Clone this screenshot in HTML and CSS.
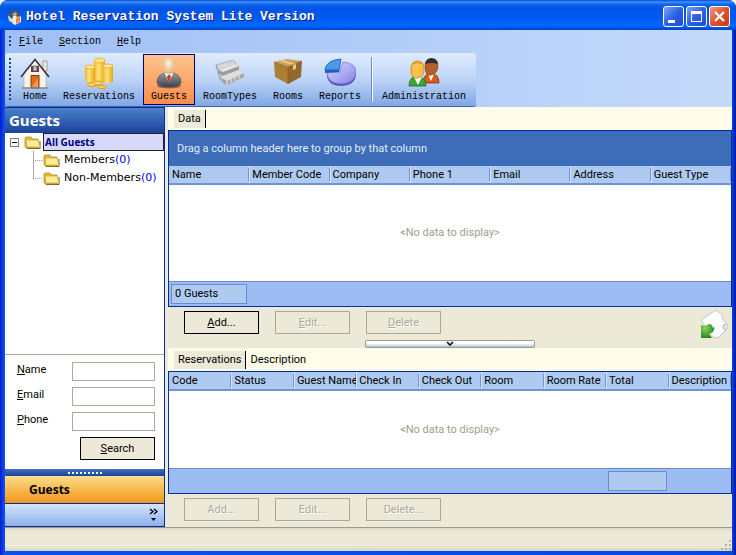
FILE: index.html
```html
<!DOCTYPE html>
<html lang="en">
<head>
    <meta charset="UTF-8">
    <meta name="viewport" content="width=device-width, initial-scale=1.0">
    <title>Hotel Reservation System Lite Version</title>
    <link rel="stylesheet" href="styles.css">
</head>
<body>
<div class="window">
    <header class="titlebar">
        <svg class="app-icon" width="14" height="16" viewBox="0 0 14 16">
            <path d="M4 7L11 5l2 3v5l-6 3-3-2z" fill="#f6ede4"/>
            <path d="M8 9l4-2v6l-4 2z" fill="#e88a50"/>
            <path d="M0 7l2-1 3 4v4l-4-2z" fill="#d4d8e2"/>
            <path d="M0 5L5 1l5 1 3 5-4 1-3-3-2 5-3-3z" fill="#4e525c"/>
            <path d="M4 5l4-2 1 3-3 1z" fill="#a8b0c0"/>
        </svg>
        <h1>Hotel Reservation System Lite Version</h1>
        <div class="window-buttons">
            <button type="button" aria-label="Minimize">
                <svg width="19" height="19" viewBox="0 0 19 19"><path d="M4 13h7v3H4z" fill="#fff"/></svg>
            </button>
            <button type="button" aria-label="Maximize">
                <svg width="19" height="19" viewBox="0 0 19 19"><path d="M4 4h11v11H4z M5 7v7h9V7z" fill="#fff" fill-rule="evenodd"/></svg>
            </button>
            <button type="button" class="close" aria-label="Close">
                <svg width="19" height="19" viewBox="0 0 19 19"><path d="M5 5l9 9M14 5l-9 9" stroke="#fff" stroke-width="2.4"/></svg>
            </button>
        </div>
    </header>

    <div class="bars">
        <nav class="menubar">
            <span class="grip"></span>
            <a href="#"><u>F</u>ile</a>
            <a href="#"><u>S</u>ection</a>
            <a href="#"><u>H</u>elp</a>
        </nav>
        <div class="toolbar">
            <span class="grip"></span>
            <button type="button" class="tool">
                <svg width="32" height="32" viewBox="0 0 32 32">
                    <path d="M24 4h4v10h-4z" fill="#ece8de" stroke="#888" stroke-width=".7"/>
                    <path d="M5 15L16 3l11 12v16H5z" fill="#f6f3ec" stroke="#b0aca4" stroke-width=".6"/>
                    <path d="M2 20L16 2.500 30 20" fill="none" stroke="#35353a" stroke-width="1.600"/>
                    <path d="M12 9h8v6h-8z" fill="#8c3038"/>
                    <path d="M14 9h4v5h-4z" fill="#b8c6d8" stroke="#444" stroke-width=".7"/>
                    <path d="M12 18.500h8V31h-8z" fill="#e66a1e" stroke="#863810"/>
                    <path d="M13 30l6-9v9z" fill="#f49a4c"/>
                    <path d="M3 31h26" stroke="#888" stroke-width="1.500"/>
                </svg>
                Home
            </button>
            <button type="button" class="tool">
                <svg width="32" height="32" viewBox="0 0 32 32">
                    <defs>
                        <linearGradient id="gold">
                            <stop offset="0" stop-color="#f2b428"/><stop offset=".4" stop-color="#ffe27a"/><stop offset="1" stop-color="#e8a418"/>
                        </linearGradient>
                    </defs>
                    <path d="M11 3v21a5 2 0 0 0 11 0V3z" fill="url(#gold)"/>
                    <ellipse cx="16.500" cy="3.500" rx="5.500" ry="2.500" fill="#ffe27a" stroke="#e4a420" stroke-width=".7"/>
                    <path d="M2 10v13a5 2 0 0 0 10 0V10z" fill="url(#gold)"/>
                    <ellipse cx="7" cy="10" rx="5" ry="2" fill="#ffe68c" stroke="#e4a420" stroke-width=".7"/>
                    <path d="M20 9v15a5 2 0 0 0 10 0V9z" fill="url(#gold)"/>
                    <ellipse cx="25" cy="9" rx="5" ry="2" fill="#ffe68c" stroke="#e4a420" stroke-width=".7"/>
                    <ellipse cx="9" cy="27.500" rx="4.500" ry="2" fill="#ffd44c" stroke="#e09c18"/>
                    <ellipse cx="15" cy="26" rx="4" ry="2" fill="#ffe070" stroke="#e09c18"/>
                    <ellipse cx="19" cy="30" rx="4.500" ry="1.500" fill="#ffd44c" stroke="#e09c18"/>
                </svg>
                Reservations
            </button>
            <button type="button" class="tool active">
                <svg width="32" height="32" viewBox="0 0 32 32">
                    <defs>
                        <radialGradient id="head" cx=".45" cy=".3" r=".7">
                            <stop offset="0" stop-color="#fff0d4"/><stop offset="1" stop-color="#d8b084"/>
                        </radialGradient>
                        <linearGradient id="suit" x2="0" y2="1">
                            <stop offset="0" stop-color="#9498a0"/><stop offset=".5" stop-color="#6c7078"/><stop offset="1" stop-color="#3c4048"/>
                        </linearGradient>
                    </defs>
                    <ellipse cx="16" cy="29" rx="12" ry="2.500" fill="#a06440"/>
                    <path d="M4 25q0-7 8-9h8q8 2 8 9 0 5-12 5T4 25z" fill="url(#suit)" stroke="#4a4e56" stroke-width=".6"/>
                    <path d="M11.500 16l4.500 9 4.500-9z" fill="#f8f8fa"/>
                    <path d="M15 18h2l1 2-2 6-2-6z" fill="#d03c20"/>
                    <path d="M10.500 8q0-7 5.500-7t5.500 7q0 5-2.500 8t-6 0q-2.500-3-2.500-8z" fill="url(#head)"/>
                </svg>
                Guests
            </button>
            <button type="button" class="tool">
                <svg width="32" height="32" viewBox="0 0 32 32">
                    <path d="M2 8l17-5 3 3-2 4-14 5z" fill="#d6d6d6" stroke="#a0a0a0" stroke-width=".7"/>
                    <path d="M5 13l17-6 3 2v4L8 19l-4-3z" fill="#9c9c9c"/>
                    <path d="M5 13l17-6 3 2-16 6z" fill="#e6e6e6"/>
                    <path d="M6 20l19-7 5 3v4l-16 8-4-1z" fill="#a8a8a8"/>
                    <path d="M6 20l19-7 5 3-17 8z" fill="#dedede"/>
                    <path d="M2 8l4 14 7 6" fill="none" stroke="#989898"/>
                    <path d="M13 24v4M17 22v4M21 20v4M25 18v4" stroke="#e4e4e4"/>
                </svg>
                RoomTypes
            </button>
            <button type="button" class="tool">
                <svg width="32" height="32" viewBox="0 0 32 32">
                    <path d="M2 5L14 2l16 2-13 6z" fill="#cda258"/>
                    <path d="M2 5l14 5v17L3 20z" fill="#aa7e34"/>
                    <path d="M30 4L16 10v17l13-7z" fill="#94682a"/>
                    <path d="M7 4l14 4v5l3-1V7L11 3z" fill="#e6c78c"/>
                    <path d="M2 5l14 5 14-6M16 10v17" fill="none" stroke="#7e5820" stroke-width=".6"/>
                </svg>
                Rooms
            </button>
            <button type="button" class="tool">
                <svg width="32" height="32" viewBox="0 0 32 32">
                    <defs>
                        <linearGradient id="pie" x2="1" y2="1">
                            <stop offset="0" stop-color="#dcdcff"/><stop offset="1" stop-color="#8480e4"/>
                        </linearGradient>
                    </defs>
                    <path d="M3 17v3q2 9 15 9 13-1 14-11v-3z" fill="#5a56b8"/>
                    <path d="M16 15l3-10q13 1 13 10-1 11-14 12Q4 27 3 16z" fill="url(#pie)" stroke="#6c68cc" stroke-width=".6"/>
                    <path d="M1 12Q3 3 17 2l-2 11H1z" fill="#4a9ae8" stroke="#1c5aa8" stroke-width=".8"/>
                    <path d="M1 13v3l14-1 2-10-2 8z" fill="#1c62b8"/>
                </svg>
                Reports
            </button>
            <span class="divider"></span>
            <button type="button" class="tool">
                <svg width="32" height="32" viewBox="0 0 32 32">
                    <path d="M15 26q0-9 8-10 8 1 8 10z" fill="#dc5a1c" stroke="#8c2c08" stroke-width=".8"/>
                    <path d="M20 17l3 7 3-7z" fill="#fff"/>
                    <path d="M17 9q0-7 6.500-7t6.500 7-6.500 9T17 9z" fill="#b4602c" stroke="#7c3810" stroke-width=".6"/>
                    <path d="M17 7q1-6 6.500-6T30 7q-6-2-13 0z" fill="#2c3030"/>
                    <path d="M1 29q0-9 8-10 9 1 9 10z" fill="#38a838" stroke="#147018" stroke-width=".8"/>
                    <path d="M6 20l4 8 4-8z" fill="#fff"/>
                    <path d="M3 12q0-8 6.500-8T16 12t-6.500 9T3 12z" fill="#ffc04c" stroke="#c87810" stroke-width=".8"/>
                    <path d="M4 8q2-4 5.500-4T15 8Q9 5 4 8z" fill="#f0a020"/>
                </svg>
                Administration
            </button>
        </div>
    </div>

    <div class="content">
        <aside class="sidebar">
            <h2>Guests</h2>
            <ul class="tree">
                <li>
                    <div class="node">
                        <button type="button" class="toggle" aria-label="Collapse"></button>
                        <svg class="folder" width="17" height="15" viewBox="0 0 17 15">
                            <path d="M3 13.500h13V6" fill="none" stroke="#6c5c28"/>
                            <path d="M1 3l1-1h5l1 2h6v9H2l-1-2z" fill="#e8bc40" stroke="#b08a1c" stroke-width=".8"/>
                            <path d="M3 12L2 5h12l2 7z" fill="#ffec94" stroke="#c09a2c" stroke-width=".6"/>
                        </svg>
                        <a href="#" class="selected">All Guests</a>
                    </div>
                    <ul>
                        <li class="node">
                            <svg class="folder" width="17" height="15" viewBox="0 0 17 15">
                                <path d="M3 13.500h13V6" fill="none" stroke="#6c5c28"/>
                                <path d="M1 3l1-1h5l1 2h6v9H2l-1-2z" fill="#e8bc40" stroke="#b08a1c" stroke-width=".8"/>
                                <path d="M3 12L2 5h12l2 7z" fill="#ffec94" stroke="#c09a2c" stroke-width=".6"/>
                            </svg>
                            <a href="#">Members<span>(0)</span></a>
                        </li>
                        <li class="node">
                            <svg class="folder" width="17" height="15" viewBox="0 0 17 15">
                                <path d="M3 13.500h13V6" fill="none" stroke="#6c5c28"/>
                                <path d="M1 3l1-1h5l1 2h6v9H2l-1-2z" fill="#e8bc40" stroke="#b08a1c" stroke-width=".8"/>
                                <path d="M3 12L2 5h12l2 7z" fill="#ffec94" stroke="#c09a2c" stroke-width=".6"/>
                            </svg>
                            <a href="#">Non-Members<span>(0)</span></a>
                        </li>
                    </ul>
                </li>
            </ul>
            <form class="search">
                <label for="name"><u>N</u>ame</label>
                <input type="text" id="name">
                <label for="email"><u>E</u>mail</label>
                <input type="text" id="email">
                <label for="phone"><u>P</u>hone</label>
                <input type="text" id="phone">
                <button type="button" class="btn"><u>S</u>earch</button>
            </form>
            <div class="side-splitter"></div>
            <button type="button" class="section-button">Guests</button>
            <div class="side-footer">
                <button type="button" aria-label="More sections">
                    <svg width="9" height="14" viewBox="0 0 9 14">
                        <path d="M1 1l3 2.500L1 6M5 1l3 2.500L5 6" fill="none" stroke="#000" stroke-width="1.300"/>
                        <path d="M2 10h5L4.500 13z"/>
                    </svg>
                </button>
            </div>
        </aside>

        <main class="main">
            <div class="tabs">
                <button type="button" class="tab current">Data</button>
            </div>
            <div class="grid grid-guests">
                <div class="group-bar">Drag a column header here to group by that column</div>
                <table>
                    <thead>
                        <tr><th>Name</th><th>Member Code</th><th>Company</th><th>Phone 1</th><th>Email</th><th>Address</th><th>Guest Type</th></tr>
                    </thead>
                    <tbody>
                        <tr><td colspan="7">&lt;No data to display&gt;</td></tr>
                    </tbody>
                    <tfoot>
                        <tr><td><div class="summary">0 Guests</div></td><td colspan="6"></td></tr>
                    </tfoot>
                </table>
            </div>
            <div class="actions">
                <button type="button" class="btn"><u>A</u>dd...</button>
                <button type="button" class="btn" disabled><u>E</u>dit...</button>
                <button type="button" class="btn" disabled><u>D</u>elete</button>
                <button type="button" class="export" aria-label="Export">
                    <svg width="28" height="30" viewBox="0 0 28 30">
                        <defs>
                            <radialGradient id="arrow" cx=".3" cy=".3" r=".8">
                                <stop offset="0" stop-color="#8cd460"/><stop offset="1" stop-color="#1c7c10"/>
                            </radialGradient>
                        </defs>
                        <path d="M1 11L16 1l6 5 1 5 4 4v5l-9 9-5-1z" fill="#fdfdfd" stroke="#c4c4c8"/>
                        <path d="M26 15q-3 0-3 3t3 3" fill="#e4e4ec" stroke="#b4b4c0"/>
                        <path d="M1 16l4 1 4-2 3 1 1 3 2-1-2 5-4 2 3 4H1z" fill="url(#arrow)"/>
                    </svg>
                </button>
            </div>
            <button type="button" class="splitter" aria-label="Collapse details">
                <svg width="8" height="5" viewBox="0 0 8 5"><path d="M1 1l3 3 3-3" fill="none" stroke="#000" stroke-width="1.500"/></svg>
            </button>
            <div class="tabs">
                <button type="button" class="tab current">Reservations</button>
                <button type="button" class="tab">Description</button>
            </div>
            <div class="grid grid-details">
                <table>
                    <thead>
                        <tr><th>Code</th><th>Status</th><th>Guest Name</th><th>Check In</th><th>Check Out</th><th>Room</th><th>Room Rate</th><th>Total</th><th>Description</th></tr>
                    </thead>
                    <tbody>
                        <tr><td colspan="9">&lt;No data to display&gt;</td></tr>
                    </tbody>
                    <tfoot>
                        <tr><td colspan="7"></td><td><div class="summary"></div></td><td></td></tr>
                    </tfoot>
                </table>
            </div>
            <div class="actions">
                <button type="button" class="btn" disabled>Add...</button>
                <button type="button" class="btn" disabled>Edit...</button>
                <button type="button" class="btn" disabled>Delete...</button>
            </div>
        </main>
    </div>

    <footer class="statusbar">
        <svg width="12" height="12" viewBox="0 0 12 12">
            <path d="M9 1h2v2H9zM5 5h2v2H5zM9 5h2v2H9zM1 9h2v2H1zM5 9h2v2H5zM9 9h2v2H9z" fill="#b8b4a0"/>
        </svg>
    </footer>
</div>
</body>
</html>
```

FILE: styles.css
```css
* { box-sizing: border-box; }
body { margin: 0; background: #fff; font: 11px/14px Roboto, "Liberation Sans", Arial, sans-serif; color: #000; }
button, input { font: inherit; color: inherit; margin: 0; padding: 0; border: 0; background: none; }
a { color: inherit; text-decoration: none; }
ul { list-style: none; margin: 0; padding: 0; }
svg { display: block; }

.window { display: flex; flex-direction: column; min-height: 100vh; padding: 0 4px 4px 5px; border-radius: 8px 8px 0 0; background: linear-gradient(to right, #0019cf, #0a4ff0 4px, #0048e8 calc(100% - 4px), #0010a0); }

/* title bar */
.titlebar { display: flex; align-items: center; gap: 4px; height: 30px; margin: 0 -4px 0 -5px; padding: 3px 6px 0 8px; border-radius: 8px 8px 0 0; background: linear-gradient(#0a48d0, #3f94ff 2px, #1068f0 4px, #0054e3 8px, #0058ee 16px, #0068ff 26px, #0040c8); }
.titlebar h1 { flex: 1; margin: 0; font: bold 13px/18px "Liberation Mono", "Courier New", monospace; color: #fff; text-shadow: 1px 1px 0 #0a1883; }
.window-buttons { display: flex; gap: 2px; }
.window-buttons button { border: 1px solid #fff; border-radius: 3px; background: linear-gradient(135deg, #7ea4f8, #2c60e8 50%, #1c4cd8); }
.window-buttons .close { background: linear-gradient(135deg, #f0a080, #e0502c 50%, #c83c18); }

/* menu and toolbar */
.bars { background: linear-gradient(to right, #9ebef5, #c4dafa); font: 10px/12px "Liberation Mono", "Courier New", monospace; }
.menubar { display: flex; align-items: center; gap: 16px; height: 23px; padding-left: 4px; }
.grip { width: 2px; height: 11px; margin-right: -8px; background: repeating-linear-gradient(#27418f 0 2px, transparent 2px 4px); }
.toolbar { display: flex; align-items: center; width: fit-content; height: 54px; padding: 0 2px 0 4px; border-radius: 3px; border-bottom: 1px solid #3a62b0; background: linear-gradient(#dfecfe, #bdd4f8 50%, #80a7e4); }
.toolbar .grip { height: 44px; margin-right: 4px; }
.tool { display: flex; flex-direction: column; align-items: center; gap: 2px; height: 51px; padding: 2px 7px 0; border: 1px solid transparent; }
.tool svg { margin: 0 -4px; }
.tool.active { border-color: #000080; background: linear-gradient(#fdc58c, #fb8c4c); }
.divider { width: 2px; height: 45px; margin: 0 1px 0 2px; border-left: 1px solid #6a8ccb; border-right: 1px solid #fff; }

.content { flex: 1; display: flex; background: #ece9d8; }

/* sidebar */
.sidebar { display: flex; flex-direction: column; width: 160px; border-right: 1px solid #002d96; border-bottom: 1px solid #002d96; background: #fff; }
.sidebar h2 { margin: 0; padding: 0 4px; border-top: 1px solid #002d96; background: linear-gradient(#4a80c8, #1c429c); font: bold 15px/25px "Open Sans", Verdana, sans-serif; color: #fff; }
.tree { flex: 1; border-bottom: 1px solid #aca899; font: 11px/18px "DejaVu Sans", Verdana, sans-serif; }
.node { display: flex; align-items: center; height: 18px; }
.toggle { width: 9px; height: 9px; margin: 0 5px; border: 1px solid #808080; background: linear-gradient(#000, #000) center / 5px 1px no-repeat; }
.folder { margin-right: 4px; }
.tree .selected { flex: 1; padding: 0 1px; margin-left: -2px; border: 1px solid #222; background: #d8d8fa; font: bold 10px/16px "Open Sans", Verdana, sans-serif; color: #000080; }
.tree ul { margin-left: 28px; background: linear-gradient(#aaa, #aaa) 0 0 / 1px 27px no-repeat; }
.tree ul .node::before { content: ""; width: 9px; margin-right: 1px; border-top: 1px dotted #999; }
.tree span { color: #0000e0; }
.search { display: grid; grid-template-columns: 1fr 83px; gap: 6px 0; padding: 7px 9px 9px 12px; }
.search label { padding-top: 1px; }
.search input { height: 19px; padding: 0 3px; border: 1px solid #aca899; background: #fff; }
.search .btn { grid-column: 1 / -1; justify-self: end; }
.side-splitter { display: flex; justify-content: center; align-items: center; height: 7px; background: linear-gradient(#3c70c0, #1c429c); }
.side-splitter::before { content: ""; width: 34px; height: 2px; background: repeating-linear-gradient(to right, #fff 0 2px, transparent 2px 4px); }
.section-button { height: 28px; padding-left: 24px; border-bottom: 1px solid #002d96; background: linear-gradient(#fcdc90, #f8b648 55%, #ee9820); font: bold 12px/14px "Open Sans", Verdana, sans-serif; text-align: left; }
.side-footer { display: flex; justify-content: flex-end; align-items: center; height: 22px; padding-right: 6px; background: linear-gradient(#d4e4fc, #8cb0ec); }

/* buttons */
.btn { width: 75px; height: 23px; border: 1px solid #000; background: #ece9d8; }
.btn:disabled { border-color: #aca899; color: #aca899; text-shadow: 1px 1px 0 #fff; }

/* right side */
.main { flex: 1; min-width: 0; display: flex; flex-direction: column; padding-left: 3px; }
.tabs { display: flex; height: 23px; padding: 3px 0 2px 6px; background: #fffdea; }
.tab { padding: 0 4px; }
.tab.current { border-right: 1px solid #000; background: #ece9d8; }
.grid { display: flex; flex-direction: column; border: 1px solid #002d96; background: #fff; }
.grid-guests { flex: 1; }
.group-bar { height: 35px; padding: 0 8px; background: #3d6cb8; line-height: 35px; color: #e4eefc; }
.grid table { flex: 1; width: 100%; border-collapse: separate; border-spacing: 0; table-layout: fixed; }
.grid th { height: 19px; padding: 0 1px 0 3px; border-bottom: 2px solid #6f92d8; background: linear-gradient(#7094dc, #7094dc) right 0 top 2px / 1px 13px no-repeat, #aecaf0; font-weight: normal; text-align: left; white-space: nowrap; overflow: hidden; }
.grid th + th { box-shadow: inset 1px 0 0 #d4e4fc; }
.grid tbody td { height: 77px; padding: 0; text-align: center; color: #a09c8c; }
.grid tfoot td { height: 25px; padding: 0 2px; border-top: 1px solid #6a8ccb; background: #9ebcf4; }
.summary { height: 20px; padding: 0 3px; border: 1px solid #6a8ccb; background: #aecaf0; line-height: 18px; }
.actions { display: flex; gap: 16px; height: 33px; padding: 4px 4px 0 16px; }
.export { margin: -3px 0 0 auto; }
.splitter { align-self: center; display: flex; justify-content: center; width: 30%; height: 8px; border: 1px solid #9c9a8c; border-radius: 2px; background: linear-gradient(#fff 40%, #a4c4e4); }

.statusbar { display: flex; justify-content: flex-end; align-items: flex-end; height: 24px; border-top: 1px solid #9c9a8c; background: linear-gradient(#dcd9c4, #ece9d8 4px, #ece9d8 18px, #d8d5bc); }
```
